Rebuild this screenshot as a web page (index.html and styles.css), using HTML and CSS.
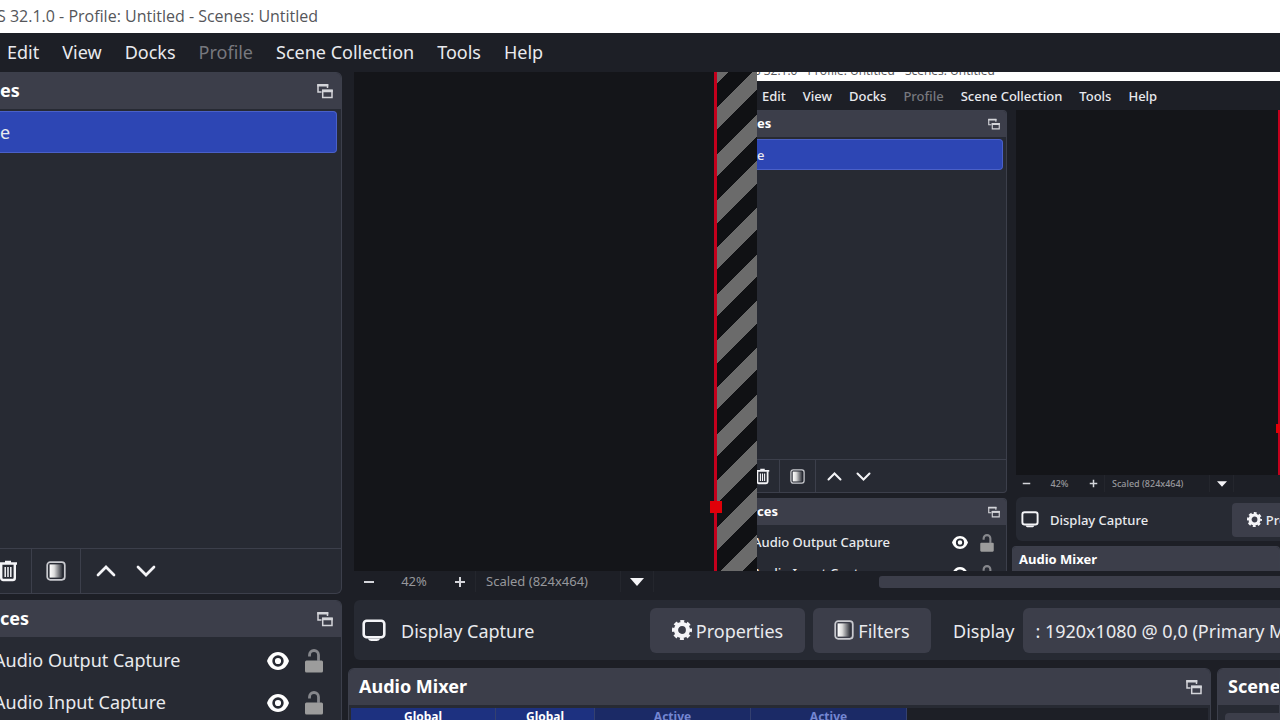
FILE: index.html
```html
<!DOCTYPE html>
<html lang="en">
<head>
    <meta charset="UTF-8">
    <meta name="viewport" content="width=device-width, initial-scale=1.0">
    <title>Profile: Untitled - Scenes: Untitled</title>
    <link rel="stylesheet" href="styles.css">
</head>
<body>
    <!-- Icons shared by the window and its preview -->
    <svg class="sprite" width="0" height="0" aria-hidden="true">
        <defs>
            <linearGradient id="fade" x1="0" x2="1" y1="0" y2="0">
                <stop offset="0" stop-color="#fff"/>
                <stop offset=".35" stop-color="#ddd"/>
                <stop offset="1" stop-color="#272a33"/>
            </linearGradient>
        </defs>
        <symbol id="popout" viewBox="0 0 16 16">
            <path d="M4.500 9H1V2h9.500v3" fill="none" stroke="currentColor" stroke-width="1.500"/>
            <path d="M.3 1h11v2.400H.3z" fill="currentColor"/>
            <path d="M5.700 7.500h9.300V14.500H5.700z" fill="none" stroke="currentColor" stroke-width="1.500"/>
            <path d="M5 6.500h10.800v2.700H5z" fill="currentColor"/>
        </symbol>
        <symbol id="trash" viewBox="0 0 20 22">
            <path d="M1 3.500h18M7 2h6" stroke="currentColor" stroke-width="2.400" fill="none"/>
            <path d="M3.200 4v14a2 2 0 0 0 2 2h9.600a2 2 0 0 0 2-2V4" stroke="currentColor" stroke-width="2.400" fill="none"/>
            <path d="M7.200 7v10M10 7v10M12.800 7v10" stroke="currentColor" stroke-width="1.500"/>
        </symbol>
        <symbol id="filter" viewBox="0 0 20 20">
            <rect x="1.200" y="1.200" width="17.600" height="17.600" rx="3" fill="none" stroke="#c9cacf" stroke-width="1.700"/>
            <rect x="3.600" y="3.400" width="13" height="13.200" fill="url(#fade)"/>
        </symbol>
        <symbol id="up" viewBox="0 0 20 12">
            <path d="M2 10l8-8 8 8" fill="none" stroke="currentColor" stroke-width="2.700" stroke-linecap="round"/>
        </symbol>
        <symbol id="down" viewBox="0 0 20 12">
            <path d="M2 2l8 8 8-8" fill="none" stroke="currentColor" stroke-width="2.700" stroke-linecap="round"/>
        </symbol>
        <symbol id="eye" viewBox="0 0 22 18">
            <path d="M11 0C5.500 0 1.700 4 0 9c1.700 5 5.500 9 11 9s9.300-4 11-9c-1.700-5-5.500-9-11-9z" fill="#fff"/>
            <circle cx="11" cy="9" r="4.400" fill="none" stroke="#272a33" stroke-width="2.600"/>
        </symbol>
        <symbol id="lock" viewBox="0 0 18 24">
            <rect y="11.500" width="18" height="12" rx="1.500" fill="#9c9c9c"/>
            <path d="M13.500 12V6a4.500 4.500 0 0 0-9 0v1.500" fill="none" stroke="#86878c" stroke-width="2.800"/>
        </symbol>
        <symbol id="screen" viewBox="0 0 24 23">
            <rect x="1.700" y="1.700" width="20.600" height="16.600" rx="3" fill="none" stroke="currentColor" stroke-width="2.600"/>
            <path d="M6 19.500h12c-.5 1.800-2 2.500-3.500 2.500h-5C8 22 6.500 21.300 6 19.500z" fill="currentColor"/>
        </symbol>
        <symbol id="gear" viewBox="0 0 20 20">
            <circle cx="10" cy="10" r="6" fill="none" stroke="currentColor" stroke-width="4.200"/>
            <circle cx="10" cy="10" r="8" fill="none" stroke="currentColor" stroke-width="4" stroke-dasharray="3.600 2.680" stroke-dashoffset="1.800"/>
        </symbol>
        <symbol id="minus" viewBox="0 0 12 12">
            <path d="M1 6h10" stroke="currentColor" stroke-width="2"/>
        </symbol>
        <symbol id="plus" viewBox="0 0 12 12">
            <path d="M1 6h10M6 1v10" stroke="currentColor" stroke-width="2"/>
        </symbol>
        <symbol id="caret" viewBox="0 0 14 8">
            <path d="M0 0h14L7 8z" fill="currentColor"/>
        </symbol>
    </svg>

    <div class="window">
        <header class="titlebar">S 32.1.0 - Profile: Untitled - Scenes: Untitled</header>
        <nav class="menubar">
            <button>Edit</button>
            <button>View</button>
            <button>Docks</button>
            <button disabled>Profile</button>
            <button>Scene Collection</button>
            <button>Tools</button>
            <button>Help</button>
        </nav>
        <div class="workspace">
            <div class="sidebar">
                <section class="dock scenes">
                    <h2 class="dock-title">es <button aria-label="Pop out"><svg class="popout"><use href="#popout"/></svg></button></h2>
                    <ul class="scene-list"><li class="selected">e</li></ul>
                    <div class="toolbar">
                        <button class="remove" aria-label="Remove"><svg class="trash"><use href="#trash"/></svg></button>
                        <button class="filters" aria-label="Filters"><svg class="filter"><use href="#filter"/></svg></button>
                        <button class="move" aria-label="Move up"><svg class="chevron"><use href="#up"/></svg></button>
                        <button class="move" aria-label="Move down"><svg class="chevron"><use href="#down"/></svg></button>
                    </div>
                </section>
                <section class="dock sources">
                    <h2 class="dock-title">ces <button aria-label="Pop out"><svg class="popout"><use href="#popout"/></svg></button></h2>
                    <ul class="source-list">
                        <li><span>Audio Output Capture</span>
                            <button aria-label="Hide"><svg class="eye"><use href="#eye"/></svg></button>
                            <button aria-label="Lock"><svg class="lock"><use href="#lock"/></svg></button></li>
                        <li><span>Audio Input Capture</span>
                            <button aria-label="Hide"><svg class="eye"><use href="#eye"/></svg></button>
                            <button aria-label="Lock"><svg class="lock"><use href="#lock"/></svg></button></li>
                    </ul>
                </section>
            </div>

            <main class="main">
                <div class="preview">
                    <div class="selection">
                        <span class="handle"></span>
                        <div class="hatch"></div>

                        <!-- The captured display shows this window again -->
                        <div class="window mini">
                            <div class="titlebar">S 32.1.0 - Profile: Untitled - Scenes: Untitled</div>
                            <div class="menubar">
                                <button>Edit</button>
                                <button>View</button>
                                <button>Docks</button>
                                <button disabled>Profile</button>
                                <button>Scene Collection</button>
                                <button>Tools</button>
                                <button>Help</button>
                            </div>
                            <div class="workspace">
                                <div class="sidebar">
                                    <section class="dock scenes">
                                        <h2 class="dock-title">es <button aria-label="Pop out"><svg class="popout"><use href="#popout"/></svg></button></h2>
                                        <ul class="scene-list"><li class="selected">e</li></ul>
                                        <div class="toolbar">
                                            <button class="remove" aria-label="Remove"><svg class="trash"><use href="#trash"/></svg></button>
                                            <button class="filters" aria-label="Filters"><svg class="filter"><use href="#filter"/></svg></button>
                                            <button class="move" aria-label="Move up"><svg class="chevron"><use href="#up"/></svg></button>
                                            <button class="move" aria-label="Move down"><svg class="chevron"><use href="#down"/></svg></button>
                                        </div>
                                    </section>
                                    <section class="dock sources">
                                        <h2 class="dock-title">ces <button aria-label="Pop out"><svg class="popout"><use href="#popout"/></svg></button></h2>
                                        <ul class="source-list">
                                            <li><span>Audio Output Capture</span>
                                                <button aria-label="Hide"><svg class="eye"><use href="#eye"/></svg></button>
                                                <button aria-label="Lock"><svg class="lock"><use href="#lock"/></svg></button></li>
                                            <li><span>Audio Input Capture</span>
                                                <button aria-label="Hide"><svg class="eye"><use href="#eye"/></svg></button>
                                                <button aria-label="Lock"><svg class="lock"><use href="#lock"/></svg></button></li>
                                        </ul>
                                    </section>
                                </div>
                                <div class="main">
                                    <div class="preview">
                                        <div class="selection"><span class="handle"></span></div>
                                    </div>
                                    <div class="statusbar">
                                        <button class="zoom-out" aria-label="Zoom out"><svg class="sign"><use href="#minus"/></svg></button>
                                        <span class="percent">42%</span>
                                        <button class="zoom-in" aria-label="Zoom in"><svg class="sign"><use href="#plus"/></svg></button>
                                        <select class="scale" aria-label="Preview scale"><option>Scaled (824x464)</option></select>
                                        <span class="caret-box"><svg class="caret"><use href="#caret"/></svg></span>
                                    </div>
                                    <div class="context">
                                        <svg class="screen"><use href="#screen"/></svg>
                                        <span class="source-name">Display Capture</span>
                                        <button class="btn properties"><svg class="gear"><use href="#gear"/></svg>Properties</button>
                                    </div>
                                    <div class="bottom">
                                        <section class="dock mixer">
                                            <h2 class="dock-title">Audio Mixer</h2>
                                        </section>
                                    </div>
                                </div>
                            </div>
                        </div>
                    </div>
                </div>

                <div class="statusbar">
                    <button class="zoom-out" aria-label="Zoom out"><svg class="sign"><use href="#minus"/></svg></button>
                    <span class="percent">42%</span>
                    <button class="zoom-in" aria-label="Zoom in"><svg class="sign"><use href="#plus"/></svg></button>
                    <select class="scale" aria-label="Preview scale"><option>Scaled (824x464)</option></select>
                    <span class="caret-box"><svg class="caret"><use href="#caret"/></svg></span>
                    <div class="scrollbar"></div>
                </div>

                <div class="context">
                    <svg class="screen"><use href="#screen"/></svg>
                    <span class="source-name">Display Capture</span>
                    <button class="btn properties"><svg class="gear"><use href="#gear"/></svg>Properties</button>
                    <button class="btn filter-btn"><svg class="filter"><use href="#filter"/></svg>Filters</button>
                    <label for="display">Display</label>
                    <select id="display" class="btn display"><option>: 1920x1080 @ 0,0 (Primary Monitor)</option></select>
                </div>

                <div class="bottom">
                    <section class="dock mixer">
                        <h2 class="dock-title">Audio Mixer <button aria-label="Pop out"><svg class="popout"><use href="#popout"/></svg></button></h2>
                        <div class="channels">
                            <span class="channel global">Global</span>
                            <span class="channel global narrow">Global</span>
                            <span class="channel">Active</span>
                            <span class="channel">Active</span>
                        </div>
                    </section>
                    <section class="dock transitions">
                        <h2 class="dock-title">Scene</h2>
                        <div class="transition-box"></div>
                    </section>
                </div>
            </main>
        </div>
    </div>
</body>
</html>
```
FILE: styles.css
```css
* {
    box-sizing: border-box;
}
body {
    margin: 0;
    background: #1d1f26;
}
.sprite {
    position: absolute;
}
.window {
    --text: 18px;
    --small: 13px;
    --title: 16px;
    --title-h: 33px;
    --menu-h: 39px;
    --menu-gap: 23px;
    --menu-pad: 7px;
    --side-w: 342px;
    --gap: 12px;
    --head-h: 36px;
    --row-h: 42px;
    --tool-h: 45px;
    --dock-gap: 6px;
    --clip: -6px;
    --drop: 2px;
    --radius: 6px;
    --status-h: 21px;
    --context-h: 60px;
    --context-gap: 8px;
    --mixer-pull: -6px;
    display: flex;
    flex-direction: column;
    height: 100vh;
    overflow: hidden;
    background: #1d1f26;
    color: #e9eaee;
    font: var(--text)/1.3 "Noto Sans", sans-serif;
    white-space: nowrap;
}
button, select {
    padding: 0;
    border: 0;
    background: none;
    color: inherit;
    font: inherit;
    appearance: none;
}
button {
    display: flex;
    align-items: center;
    flex: none;
}
svg {
    flex: none;
    color: #f4f4f7;
}
ul {
    margin: 0;
    padding: 0;
    list-style: none;
}

/* Title and menu */
.titlebar {
    flex: none;
    height: var(--title-h);
    margin-left: -3px;
    background: #fff;
    color: #55565a;
    font-family: "Open Sans", sans-serif;
    font-size: var(--title);
    line-height: var(--title-h);
}
.menubar {
    display: flex;
    flex: none;
    gap: var(--menu-gap);
    height: var(--menu-h);
    padding: 1px 0 0 var(--menu-pad);
}
.menubar button:disabled {
    color: #77787e;
}
.workspace {
    display: flex;
    flex: 1;
    gap: var(--gap);
    min-height: 0;
}

/* Docks */
.sidebar {
    display: flex;
    flex: none;
    flex-direction: column;
    gap: var(--dock-gap);
    width: var(--side-w);
}
.dock {
    display: flex;
    flex-direction: column;
    border: 1px solid #3c3f4b;
    border-left: 0;
    border-radius: 0 var(--radius) var(--radius) 0;
    background: #272a33;
    overflow: hidden;
}
.dock-title {
    display: flex;
    align-items: center;
    justify-content: space-between;
    flex: none;
    height: var(--head-h);
    margin: 0;
    padding: 0 8px 1px 0;
    background: #3c3e4a;
    color: #fff;
    font-size: var(--text);
}
.popout {
    width: 16px;
    height: 16px;
    color: #d4d5da;
}
.scenes {
    flex: 1;
}
.scene-list {
    flex: 1;
    padding: 2px 4px 0 0;
}
.selected {
    display: flex;
    align-items: center;
    height: var(--row-h);
    padding-top: var(--drop);
    border: 1px solid #4a60c8;
    border-left: 0;
    border-radius: 0 4px 4px 0;
    background: #2d46b4;
}
.toolbar {
    display: flex;
    align-items: center;
    height: var(--tool-h);
    border-top: 1px solid #3c3f4b;
}
.toolbar button {
    justify-content: center;
    align-self: stretch;
}
.toolbar .remove {
    width: 32px;
}
.toolbar .remove, .toolbar .filters {
    border-right: 1px solid #3c3f4b;
}
.remove svg {
    margin-right: 16px;
}
.toolbar .filters {
    width: 49px;
    margin-right: 5px;
}
.move {
    width: 40px;
}
.trash {
    width: 20px;
    height: 22px;
}
.filter {
    width: 20px;
    height: 20px;
}
.chevron {
    width: 20px;
    height: 12px;
}
.sources {
    flex: none;
    height: 120px;
    border-bottom: 0;
    border-bottom-right-radius: 0;
}
.source-list {
    padding-top: 3px;
}
.sources li {
    display: flex;
    align-items: center;
    height: var(--row-h);
    margin-left: var(--clip);
    padding-right: 18px;
}
.sources li span {
    flex: 1;
}
.eye {
    width: 22px;
    height: 18px;
    margin-right: 16px;
}
.lock {
    width: 18px;
    height: 24px;
}

/* Preview */
.main {
    display: flex;
    flex: 1;
    flex-direction: column;
    min-width: 0;
}
.preview {
    display: flex;
    flex: 1;
    min-height: 0;
    padding-left: 360px;
    background: #141519;
    overflow: hidden;
}
.selection {
    position: relative;
    display: flex;
    flex: 1;
    min-width: 0;
    border-left: 3px solid #c4001c;
}
.handle {
    position: absolute;
    top: 429px;
    left: -7px;
    width: 12px;
    height: 12px;
    background: #e00008;
}
.hatch {
    flex: none;
    width: 40px;
    background: repeating-linear-gradient(135deg, #6b6b6b 0 8px, #101114 8px 25px, #6b6b6b 25px 33px);
}

/* Zoom and scale strip */
.statusbar {
    display: flex;
    align-items: center;
    flex: none;
    height: var(--status-h);
    color: #97989c;
    font-size: var(--small);
}
.zoom-out {
    width: 30px;
    justify-content: center;
}
.percent {
    width: 60px;
    text-align: center;
}
.zoom-in {
    width: 31px;
    justify-content: center;
}
.sign {
    width: 12px;
    height: 12px;
    color: #d4d5da;
}
.scale {
    width: 146px;
    height: 100%;
    padding-left: 10px;
    border: 1px solid #24262d;
    border-width: 0 1px;
}
.caret-box {
    display: flex;
    align-items: center;
    justify-content: center;
    width: 33px;
    height: 100%;
    border-right: 1px solid #24262d;
}
.caret {
    width: 14px;
    height: 8px;
}
.scrollbar {
    flex: 1;
    height: 12px;
    margin-left: 225px;
    border-radius: 3px 0 0 3px;
    background: #3c3e4a;
}

/* Context bar */
.context {
    display: flex;
    align-items: center;
    flex: none;
    height: var(--context-h);
    margin-top: var(--context-gap);
    padding: 1px 0 0 8px;
    border-radius: 6px 0 0 6px;
    background: #272a33;
    overflow: hidden;
}
.screen {
    width: 24px;
    height: 23px;
}
.source-name {
    flex: none;
    width: 249px;
    margin-left: 15px;
}
.source-name, .context label, .btn {
    padding-top: var(--drop);
}
.btn {
    justify-content: center;
    flex: none;
    height: 45px;
    border-radius: 6px;
    background: #3c3e4a;
}
.btn svg {
    margin: 0 4px 3px 0;
}
.gear {
    width: 20px;
    height: 20px;
}
.properties {
    width: 155px;
}
.filter-btn {
    width: 118px;
    margin: 0 22px 0 8px;
}
.display {
    width: 360px;
    margin-left: 9px;
    padding-left: 12px;
}

/* Bottom docks */
.bottom {
    display: flex;
    flex: none;
    gap: 6px;
    height: 52px;
    margin: 8px 0 0 var(--mixer-pull);
}
.mixer {
    flex: 1;
    border-left: 1px solid #3c3f4b;
    border-bottom: 0;
    border-radius: var(--radius) var(--radius) 0 0;
}
.mixer .dock-title {
    padding-left: 10px;
}
.channels {
    display: flex;
    flex: 1;
    margin: 3px 2px 0;
    background: #1d1f26;
    font-size: 12px;
    font-weight: bold;
    overflow: hidden;
}
.channel {
    width: 156px;
    height: 20px;
    padding-top: 1px;
    border-right: 1px solid #34406f;
    background: #1b2a66;
    color: #7486d2;
    text-align: center;
}
.global {
    width: 145px;
    background: #1d3180;
    color: #fff;
}
.narrow {
    width: 99px;
}
.transitions {
    flex: none;
    width: 63px;
    border-left: 1px solid #3c3f4b;
    border-bottom: 0;
    border-radius: var(--radius) 0 0 0;
}
.transitions .dock-title {
    padding: 0 0 1px 10px;
}
.transition-box {
    flex: 1;
    margin: 8px 0 0 7px;
    border-radius: 4px 0 0 0;
    background: #3c3e4a;
}

/* Window as seen inside its own preview */
.mini {
    --text: 13px;
    --small: 9px;
    --title: 12px;
    --title-h: 24px;
    --menu-h: 29px;
    --menu-gap: 17px;
    --menu-pad: 5px;
    --side-w: 250px;
    --gap: 9px;
    --head-h: 26px;
    --row-h: 31px;
    --tool-h: 33px;
    --dock-gap: 5px;
    --clip: -4px;
    --radius: 4px;
    --status-h: 17px;
    --context-h: 44px;
    --context-gap: 5px;
    --mixer-pull: -4px;
    flex: 1;
    min-width: 0;
    height: 560px;
    margin-top: -15px;
    font-weight: 500;
}
.mini .titlebar {
    line-height: 27px;
}
.mini .scenes {
    flex: none;
    height: 383px;
}
.mini .dock-title {
    padding-right: 6px;
}
.mini .popout {
    width: 12px;
    height: 12px;
}
.mini .scene-list {
    padding-right: 3px;
}
.mini .remove {
    width: 23px;
}
.mini .remove svg {
    margin-right: 12px;
}
.mini .filters {
    width: 36px;
    margin-right: 4px;
}
.mini .move {
    width: 29px;
}
.mini .trash {
    width: 15px;
    height: 17px;
}
.mini .filter, .mini .gear {
    width: 15px;
    height: 15px;
}
.mini .chevron {
    width: 15px;
    height: 9px;
}
.mini .source-list {
    padding-top: 2px;
}
.mini .sources li {
    padding-right: 12px;
}
.mini .eye {
    width: 16px;
    height: 13px;
    margin-right: 12px;
}
.mini .lock {
    width: 14px;
    height: 18px;
}
.mini .preview {
    flex: none;
    height: 365px;
    padding-left: 262px;
}
.mini .handle {
    top: 314px;
    left: -5px;
    width: 9px;
    height: 9px;
}
.mini .zoom-out {
    width: 21px;
}
.mini .percent {
    width: 45px;
}
.mini .zoom-in {
    width: 22px;
}
.mini .sign {
    width: 9px;
    height: 9px;
}
.mini .scale {
    width: 106px;
    padding-left: 7px;
}
.mini .caret-box {
    width: 24px;
}
.mini .caret {
    width: 10px;
    height: 6px;
}
.mini .context {
    padding-left: 5px;
}
.mini .screen {
    width: 18px;
    height: 17px;
}
.mini .source-name {
    width: 182px;
    margin-left: 11px;
}
.mini .btn {
    width: 113px;
    height: 34px;
    border-radius: 4px;
}
.mini .bottom {
    margin-top: 5px;
}
.mini .mixer .dock-title {
    padding-left: 6px;
}
```
